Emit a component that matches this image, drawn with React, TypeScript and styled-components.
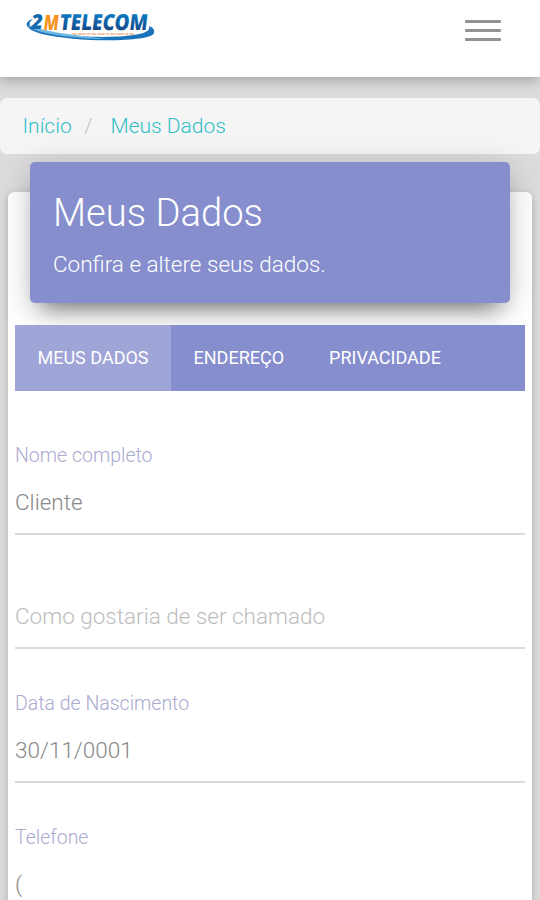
import React from "react";
import styled, { ThemeProvider, createGlobalStyle } from "styled-components";

const theme = {
  background: "#dcdcdc",
  primary: "#868ecd",
  primaryLight: "#a0a5d8",
  link: "#30bfc8",
  label: "#aaaacf",
  text: "#888888",
  placeholder: "#bdbdbd",
  border: "#dadada",
  font: 'Roboto, "Liberation Sans", sans-serif',
};

const GlobalStyle = createGlobalStyle`
  * {
    box-sizing: border-box;
  }

  body {
    margin: 0;
    background: #dcdcdc;
  }
`;

const Page = styled.div`
  display: flex;
  flex-direction: column;
  width: 100%;
  height: 100vh;
  overflow: hidden;
  background: ${({ theme }) => theme.background};
  font-family: ${({ theme }) => theme.font};
  font-weight: 300;
`;

const Navbar = styled.header`
  flex: none;
  display: flex;
  justify-content: space-between;
  align-items: flex-start;
  height: 77px;
  padding: 8px 39px 0 25px;
  background: #fff;
  box-shadow: 0 2px 14px rgba(0, 0, 0, 0.32);
`;

const LogoSvg = styled.svg`
  display: block;
  width: 132px;
  height: 36px;
  overflow: visible;
`;

const MenuButton = styled.button`
  display: flex;
  flex-direction: column;
  gap: 6px;
  width: 36px;
  margin-top: 12px;
  padding: 0;
  border: 0;
  background: none;
`;

const MenuBar = styled.span`
  height: 3px;
  border-radius: 1px;
  background: #929292;
`;

const Breadcrumb = styled.nav`
  flex: none;
  display: flex;
  align-items: center;
  height: 56px;
  margin-top: 21px;
  padding: 0 22.5px;
  border-radius: 7px;
  background: #f5f5f5;
  font-size: 21px;
`;

const Crumb = styled.a`
  color: ${({ theme }) => theme.link};
`;

const Separator = styled.span`
  margin: 0 18px 0 12.5px;
  color: #c0c0c0;
`;

const Card = styled.main`
  flex: 1 0 auto;
  margin: 38px 8px 0;
  padding: 0 7px;
  border-radius: 6px 6px 0 0;
  background: #fff;
  box-shadow: 0 3px 8px rgba(0, 0, 0, 0.22);
`;

const CardHeader = styled.div`
  height: 140.5px;
  margin: -30px 15px 0;
  padding: 27px 23px 0;
  border-radius: 5px;
  background: ${({ theme }) => theme.primary};
  box-shadow: 0 16px 22px -12px rgba(0, 0, 0, 0.5),
    0 5px 32px rgba(0, 0, 0, 0.18);
  color: #fff;
`;

const Title = styled.h1`
  margin: 0;
  font-size: 38.2px;
  line-height: 48px;
  font-weight: 300;
`;

const Subtitle = styled.p`
  margin: 14px 0 0;
  font-size: 22.5px;
  line-height: 26px;
`;

const Tabs = styled.div`
  display: flex;
  height: 66px;
  margin-top: 22.5px;
  background: ${({ theme }) => theme.primary};
`;

const Tab = styled.button<{ $active?: boolean }>`
  padding: 0 22.5px 1px;
  border: 0;
  background: ${({ $active, theme }) =>
    $active ? theme.primaryLight : "transparent"};
  color: #fff;
  font-family: inherit;
  font-size: 18px;
  font-weight: 400;
  text-transform: uppercase;
`;

const Form = styled.form`
  padding-top: 51px;
`;

const Field = styled.div<{ $gap: number }>`
  margin-bottom: ${({ $gap }) => $gap}px;
`;

const Label = styled.label`
  display: block;
  margin-bottom: 11px;
  color: ${({ theme }) => theme.label};
  font-size: 19.5px;
  line-height: 28px;
`;

const Input = styled.input`
  display: block;
  width: 100%;
  height: 54px;
  padding: 0 0 10px;
  border: 0;
  border-bottom: 2px solid ${({ theme }) => theme.border};
  outline: none;
  background: none;
  color: ${({ theme }) => theme.text};
  font-family: inherit;
  font-size: 22.5px;
  font-weight: 300;

  &::placeholder {
    color: ${({ theme }) => theme.placeholder};
    opacity: 1;
  }
`;

const Logo = () => (
  <LogoSvg
    viewBox="0 0 132 36"
    fontFamily='"Open Sans", sans-serif'
    fontWeight="800"
  >
    <defs>
      <linearGradient id="blue" x1="0" y1="0" x2="0" y2="1">
        <stop offset="0.2" stopColor="#0a80c8" />
        <stop offset="0.8" stopColor="#144a8c" />
      </linearGradient>
    </defs>
    <path
      d="M8 11C-2 14 -1 21 17 26C55 35 127 34 129 25C130 21 127 19 124 18C126 24 117 27 94 28.5C61 30 27 27 11 21C3 18 3 15 8 11Z"
      fill="#1a72b8"
    />
    <path
      d="M3 17C5 25 51 31 82 31C57 28 19 24 3 17Z"
      fill="#70b8e2"
    />
    <text
      x="6"
      y="21"
      fontSize="21"
      fontStyle="italic"
      fill="#126bb0"
      textLength="12"
      lengthAdjust="spacingAndGlyphs"
    >
      2
    </text>
    <g transform="translate(18 22) skewX(-7)">
      <text
        fontSize="21"
        fill="#f7941e"
        textLength="15"
        lengthAdjust="spacingAndGlyphs"
      >
        M
      </text>
    </g>
    <g transform="translate(34 22) skewX(-7)">
      <text
        fontSize="22"
        fill="url(#blue)"
        textLength="88"
        lengthAdjust="spacingAndGlyphs"
      >
        TELECOM
      </text>
    </g>
    <path
      d="M47 26H110"
      stroke="#f0b58c"
      strokeWidth="1.3"
      strokeDasharray="5 1 8 1 3 1"
    />
  </LogoSvg>
);

const App = () => {
  return (
    <ThemeProvider theme={theme}>
      <GlobalStyle />
      <Page>
        <Navbar>
          <Logo />
          <MenuButton aria-label="Menu">
            <MenuBar />
            <MenuBar />
            <MenuBar />
          </MenuButton>
        </Navbar>
        <Breadcrumb>
          <Crumb>Início</Crumb>
          <Separator>/</Separator>
          <Crumb>Meus Dados</Crumb>
        </Breadcrumb>
        <Card>
          <CardHeader>
            <Title>Meus Dados</Title>
            <Subtitle>Confira e altere seus dados.</Subtitle>
          </CardHeader>
          <Tabs>
            <Tab $active>Meus Dados</Tab>
            <Tab>Endereço</Tab>
            <Tab>Privacidade</Tab>
          </Tabs>
          <Form>
            <Field $gap={60}>
              <Label htmlFor="name">Nome completo</Label>
              <Input id="name" defaultValue="Cliente" />
            </Field>
            <Field $gap={41}>
              <Input placeholder="Como gostaria de ser chamado" />
            </Field>
            <Field $gap={41}>
              <Label htmlFor="birth">Data de Nascimento</Label>
              <Input id="birth" defaultValue="30/11/0001" />
            </Field>
            <Field $gap={0}>
              <Label htmlFor="phone">Telefone</Label>
              <Input id="phone" defaultValue="(" />
            </Field>
          </Form>
        </Card>
      </Page>
    </ThemeProvider>
  );
};

export default App;
